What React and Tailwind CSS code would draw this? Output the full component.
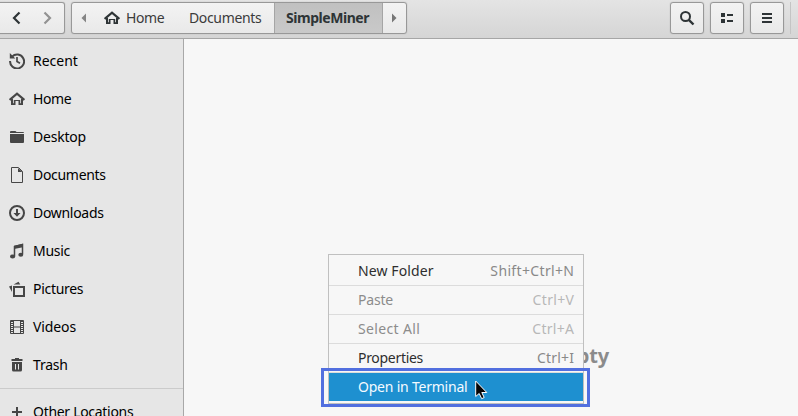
import React from "react";

const Svg = ({ children, className = "", size = 16 }) => (
  <svg width={size} height={size} viewBox="0 0 16 16" fill="none" className={`block shrink-0 ${className}`}>
    {children}
  </svg>
);

const HomeIcon = ({ className }) => (
  <Svg className={className}>
    <path d="M0.600 9 8 2.700l7.400 6.300" stroke="currentColor" strokeWidth="2.200" />
    <path d="M2 8v6h4.500v-4h3v4H14V8h-2v4.200h-.8V9H4.800v3.200H4V8z" fill="currentColor" />
  </Svg>
);
const RecentIcon = () => (
  <Svg>
    <path d="M3.100 3.600A7 7 0 1 1 1.100 8" stroke="currentColor" strokeWidth="2" />
    <path d="M.8 0v5.500h5.500z" fill="currentColor" />
    <path d="M8 4v4.500l3 1.800" stroke="currentColor" strokeWidth="1.700" />
  </Svg>
);
const DesktopIcon = () => (
  <Svg>
    <path d="M1 4V3q0-1 1-1h4q1 0 1.500 1H14q1 0 1 1z" fill="currentColor" />
    <path d="M1 5h14v8q0 1-1 1H2q-1 0-1-1z" fill="currentColor" />
  </Svg>
);
const DocumentIcon = () => (
  <Svg>
    <path d="M2.500.5h7l4 4v11h-11z" stroke="currentColor" />
    <path d="M9 1v4h4.500z" fill="currentColor" />
  </Svg>
);
const DownloadIcon = () => (
  <Svg>
    <circle cx="8" cy="8" r="7" stroke="currentColor" strokeWidth="2" />
    <path d="M7 4h2v4h2.500L8 11.800 4.500 8H7z" fill="currentColor" />
  </Svg>
);
const MusicIcon = () => (
  <Svg>
    <path d="M5.500 13V3.500l8-2V11" stroke="currentColor" strokeWidth="1.500" />
    <path d="M5 2.800 14 .7v3.500L5 6z" fill="currentColor" />
    <ellipse cx="3.600" cy="13.600" rx="2.600" ry="2" fill="currentColor" />
    <ellipse cx="11.800" cy="11.800" rx="2.500" ry="2" fill="currentColor" />
  </Svg>
);
const PicturesIcon = () => (
  <Svg>
    <path d="M5 6h10v9H5z" stroke="currentColor" strokeWidth="2" />
    <path d="M3 4.500V11L0 5.500zM4.500 3.500 9.500.8l1.800 2.700z" fill="currentColor" />
  </Svg>
);
const VideosIcon = () => (
  <Svg>
    <path d="M1.500 1.500h13v13h-13zM4.500 1v14M11.500 1v14M4 8h8" stroke="currentColor" />
    <path d="M3 2v13M13 2v13" stroke="currentColor" strokeDasharray="1 1" strokeWidth="2" />
  </Svg>
);
const TrashIcon = () => (
  <Svg>
    <path d="M2.500 2H6V1h4v1h3.500v2h-11z" fill="currentColor" />
    <path fillRule="evenodd" d="M3 5h10v8q0 1.500-1.500 1.500h-7Q3 14.500 3 13zM6 7v5.500h1V7zm3 0v5.500h1V7z" fill="currentColor" />
  </Svg>
);
const PlusIcon = () => (
  <Svg>
    <path d="M8 3v10M3 8h10" stroke="currentColor" strokeWidth="2" />
  </Svg>
);

const places = [
  ["Recent", RecentIcon, "tracking-[0px]"],
  ["Home", HomeIcon, "tracking-[-0.4px]"],
  ["Desktop", DesktopIcon, "tracking-[-0.2px]"],
  ["Documents", DocumentIcon, "tracking-[-0.3px]"],
  ["Downloads", DownloadIcon, "tracking-[-0.3px]"],
  ["Music", MusicIcon, "tracking-[-0.3px]"],
  ["Pictures", PicturesIcon, "tracking-[-0.3px]"],
  ["Videos", VideosIcon, "tracking-[-0.1px]"],
  ["Trash", TrashIcon, "tracking-[-0.2px]"],
];

function Place({ label, Icon, tracking }) {
  return (
    <li className="flex h-[38px] items-center gap-2 pl-[9px]">
      <span className="text-[#464646]"><Icon /></span>
      <span className={`whitespace-nowrap text-black ${tracking}`}>{label}</span>
    </li>
  );
}

const frame = "flex h-8 items-center border border-[#989898] bg-gradient-to-b from-[#f3f3f3] to-[#e9e9e9] shadow-[0_0_1px_#999]";

function ToolButton({ children }) {
  return <button className={`${frame} w-[34px] justify-center rounded-[3px] text-[#2e3436]`}>{children}</button>;
}

function MenuItem({ label, keys, disabled, size = "h-7", spacing = "", keySpacing = "" }) {
  return (
    <div className={`flex ${size} items-center justify-between pl-[29px] pr-[9px] ${disabled ? "text-[#8c8c8c]" : "text-[#2e2e2e]"}`}>
      <span className={spacing}>{label}</span>
      <span className={`${keySpacing} ${disabled ? "text-[#b8b8b8]" : "text-[#898989]"}`}>{keys}</span>
    </div>
  );
}

const Line = () => <div className="h-px bg-[#dcdcdc]" />;

export default function App() {
  return (
    <div className="flex h-[416px] w-[798px] flex-col overflow-hidden bg-[#f7f7f7] font-['Noto_Sans',sans-serif] text-[14px] leading-5">
      <header className="flex h-[39px] shrink-0 items-start border-b border-[#a6a6a6] bg-gradient-to-b from-[#e4e4e4] to-[#d5d5d5] pt-[2px]">
        <div className={`${frame} w-[65px] rounded-r-[3px] border-l-0`}>
          <Svg className="ml-[9px] text-[#2e3436]"><path d="M10.500 2.500 5 8l5.500 5.500" stroke="currentColor" strokeWidth="2.200" /></Svg>
          <Svg className="ml-[14px] text-[#929292]"><path d="m5.500 2.500 5.500 5.500-5.500 5.500" stroke="currentColor" strokeWidth="2.200" /></Svg>
        </div>
        <nav className={`${frame} ml-[6px] w-[336px] rounded-[3px] text-[#3b3b3b]`}>
          <Svg className="ml-1 text-[#858585]"><path d="M10 3.500v9L5.500 8z" fill="currentColor" /></Svg>
          <HomeIcon className="ml-[12px] text-[#2e3436]" />
          <span className="ml-[6px] w-[63px] tracking-[-0.4px]">Home</span>
          <span className="w-[85px] tracking-[-0.35px]">Documents</span>
          <span className="flex h-[30px] w-[109px] items-center justify-center border-x border-[#a5a5a5] bg-gradient-to-b from-[#c0c0c0] to-[#c9c9c9] pr-[2px] font-bold tracking-[-0.45px] text-[#2e3436]">SimpleMiner</span>
          <Svg className="ml-[3px] text-[#777]"><path d="M6 3.500v9L10.500 8z" fill="currentColor" /></Svg>
        </nav>
        <div className="ml-auto flex gap-[6px]">
          <ToolButton><Svg><circle cx="6.500" cy="6.500" r="4.500" stroke="currentColor" strokeWidth="2" /><path d="m9.800 9.800 4.700 4.700" stroke="currentColor" strokeWidth="2.400" /></Svg></ToolButton>
          <ToolButton><Svg><path d="M2 3h4v4H2zM2 9h4v4H2zM8 4h6v2H8zM8 10h6v2H8z" fill="currentColor" /></Svg></ToolButton>
          <ToolButton><Svg><path d="M3 3h10v2H3zM3 7h10v2H3zM3 11h10v2H3z" fill="currentColor" /></Svg></ToolButton>
        </div>
        <div className="ml-[6px] mr-[7px] h-8 w-px bg-[#c4c4c4]" />
      </header>
      <div className="flex min-h-0 flex-1">
        <aside className="w-[184px] shrink-0 overflow-hidden border-r border-[#a8a8a8] bg-[#e6e6e6] pt-[3px]">
          <ul>
            {places.map(([label, Icon, tracking]) => <Place key={label} label={label} Icon={Icon} tracking={tracking} />)}
          </ul>
          <div className="mb-1 mt-1 h-px bg-[#cbcbcb]" />
          <ul><Place label="Other Locations" Icon={PlusIcon} tracking="tracking-[-0.3px]" /></ul>
        </aside>
        <main className="relative flex-1">
          <div className="absolute right-[189px] top-[304px] text-[20px] font-bold leading-[26px] tracking-[-0.2px] text-[#8b8b8b]">Folder is Empty</div>
          <div className="absolute left-[144px] top-[215px] h-[150px] w-[256px] border border-[#c0c0c0] bg-[#f7f7f7]">
            <MenuItem label="New Folder" keys="Shift+Ctrl+N" size="h-[30px] pt-px" spacing="tracking-[0.1px]" keySpacing="tracking-[0.35px] -mr-[0.35px]" />
            <Line />
            <MenuItem label="Paste" keys="Ctrl+V" spacing="tracking-[-0.2px]" keySpacing="tracking-[0.35px] -mr-[0.35px]" disabled />
            <Line />
            <MenuItem label="Select All" keys="Ctrl+A" spacing="tracking-[0.35px]" keySpacing="tracking-[0.3px] -mr-[0.3px]" disabled />
            <Line />
            <MenuItem label="Properties" keys="Ctrl+I" spacing="tracking-[-0.3px]" keySpacing="tracking-[0.2px] -mr-[0.2px]" />
            <Line />
            <div className="flex h-7 items-center bg-[#1e90d0] pl-[29px] tracking-[-0.22px] text-[#f4faff]">Open in Terminal</div>
          </div>
          <div className="absolute left-[137px] top-[329px] h-[39px] w-[269px] border-[3px] border-[#526fdf]" />
          <svg className="absolute left-[291px] top-[341px]" width="13" height="20" viewBox="0 0 13 20">
            <path d="M.7 1v15.500l3.500-3 2.500 5.200 2.500-1.200-2.400-5h5z" fill="#050505" stroke="#fff" strokeWidth="1" />
          </svg>
        </main>
      </div>
    </div>
  );
}
